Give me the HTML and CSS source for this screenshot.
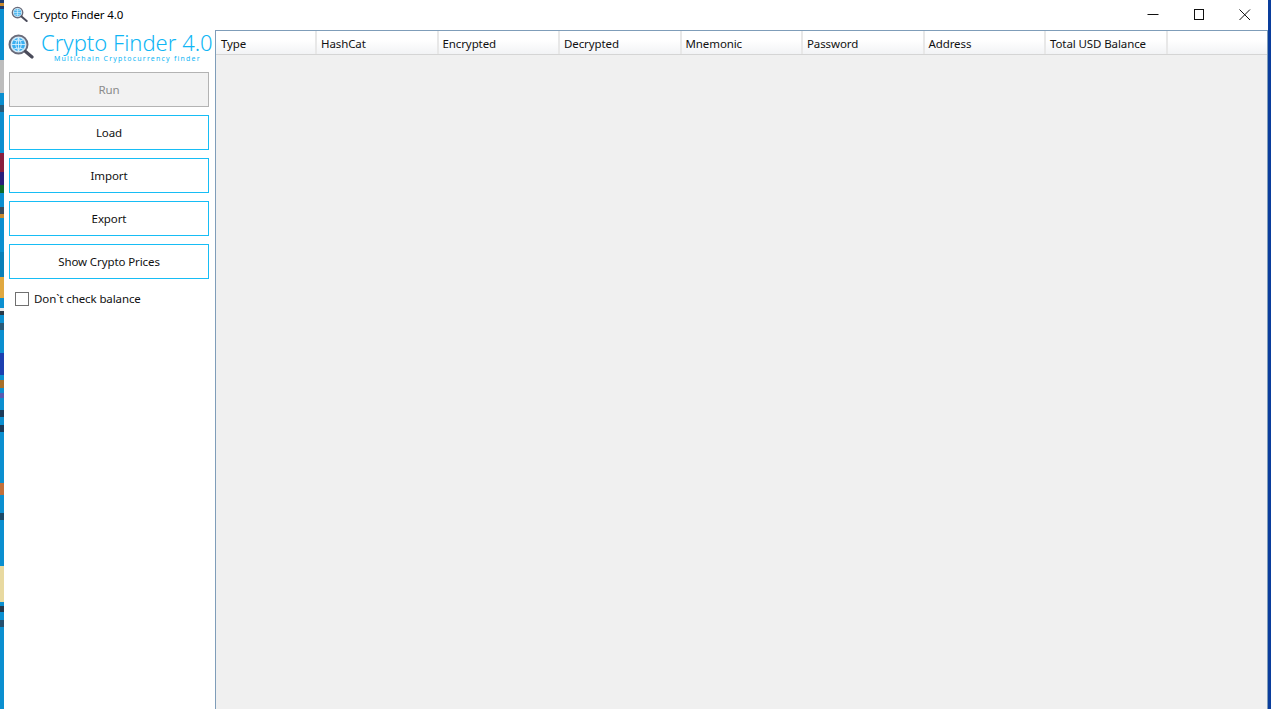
FILE: index.html
```html
<!DOCTYPE html>
<html lang="en">
<head>
<meta charset="utf-8">
<title>Crypto Finder 4.0</title>
<link rel="stylesheet" href="styles.css">
</head>
<body>
<div class="desk"></div>
<div class="window">
  <header class="titlebar">
    <svg class="ticon" viewBox="0 0 26 26"><circle cx="10" cy="10" r="8" fill="#cfe9f8" stroke="#6a6b7a" stroke-width="2"/><circle cx="10" cy="10" r="5.500" fill="#4db6ee"/><path d="M4.500 10h11M10 4.500v11M6.500 6.500c2 1 5 1 7 0M6.500 13.500c2-1 5-1 7 0" stroke="#e6f6ff" stroke-width=".9" fill="none"/><path d="M16 16l8 7" stroke="#4a4b5a" stroke-width="3" stroke-linecap="round"/></svg>
    <span class="wtitle">Crypto Finder 4.0</span>
    <div class="controls">
      <svg class="ctl" viewBox="0 0 46 30"><path d="M17.500 14.500h11" stroke="#111" fill="none"/></svg>
      <svg class="ctl" viewBox="0 0 46 30"><rect x="18.500" y="9.500" width="9" height="10" stroke="#111" fill="none"/></svg>
      <svg class="ctl" viewBox="0 0 46 30"><path d="M17.500 9.500l10.500 10.500M28 9.500L17.500 20" stroke="#111" fill="none"/></svg>
    </div>
  </header>
  <div class="content">
    <aside class="side">
      <div class="brand">
        <svg class="bicon" viewBox="0 0 26 26"><circle cx="10.500" cy="10.500" r="9" fill="#cfe9f8" stroke="#6a6b7a" stroke-width="2"/><circle cx="10.500" cy="10.500" r="6.500" fill="#39aef0"/><path d="M4 10.500h13M10.500 4v13M6 6c2.500 1.200 6.500 1.200 9 0M6 15c2.500-1.200 6.500-1.200 9 0M10.500 4c-3.500 4-3.500 9 0 13M10.500 4c3.500 4 3.500 9 0 13" stroke="#e6f6ff" stroke-width=".8" fill="none"/><path d="M17.500 17.500l6.500 5.500" stroke="#4a4b5a" stroke-width="3.200" stroke-linecap="round"/></svg>
        <div class="btext">
          <div class="bname">Crypto Finder 4.0</div>
          <div class="bsub">Multichain Cryptocurrency finder</div>
        </div>
      </div>
      <div class="actions">
        <button class="btn off" type="button">Run</button>
        <button class="btn" type="button">Load</button>
        <button class="btn" type="button">Import</button>
        <button class="btn" type="button">Export</button>
        <button class="btn" type="button">Show Crypto Prices</button>
      </div>
      <label class="check"><span class="box"></span>Don`t check balance</label>
    </aside>
    <main class="grid">
      <div class="thead">
        <div class="th">Type</div>
        <div class="th">HashCat</div>
        <div class="th">Encrypted</div>
        <div class="th">Decrypted</div>
        <div class="th">Mnemonic</div>
        <div class="th">Password</div>
        <div class="th">Address</div>
        <div class="th">Total USD Balance</div>
      </div>
    </main>
  </div>
</div>
</body>
</html>
```
FILE: styles.css
```css
* { box-sizing: border-box; }
html, body { margin: 0; height: 100%; overflow: hidden; }
body {
  display: flex;
  width: 1271px;
  height: 709px;
  background: #0a3d9c;
  font-family: "Noto Sans", "Open Sans", sans-serif;
  position: relative;
}
.desk {
  position: absolute;
  left: 0; top: 0;
  width: 4px; height: 709px;
  background: linear-gradient(
    #1c3a70 0 3px, #c98a2e 3px 6px, #1c3a70 6px 9px,
    #0b8fd0 9px 60px,
    #bdbdbd 60px 93px,
    #0b8fd0 93px 105px, #2a5a78 105px 112px,
    #0b8fd0 112px 153px,
    #8a1e3c 153px 172px, #2a1e7c 172px 185px, #0f6a2a 185px 193px,
    #0b8fd0 193px 207px, #3a4a5a 207px 214px, #c98a2e 214px 218px,
    #0b8fd0 218px 252px, #0a7fb8 252px 277px,
    #e0a840 277px 298px,
    #0b8fd0 298px 308px, #e8e8e8 308px 311px, #2a3a48 311px 315px,
    #0b8fd0 315px 323px, #2a5a78 323px 330px,
    #0b8fd0 330px 353px, #1c3fb0 353px 375px,
    #0b8fd0 375px 380px, #a8702a 380px 388px,
    #0b8fd0 388px 393px, #5a5ab0 393px 398px,
    #0b8fd0 398px 410px, #1c3a58 410px 417px,
    #0b8fd0 417px 425px, #1c3a58 425px 432px,
    #0b8fd0 432px 483px, #c4703a 483px 495px,
    #0b8fd0 495px 513px, #1c4a68 513px 520px,
    #0b8fd0 520px 566px, #e8d9a0 566px 602px,
    #0b8fd0 602px 606px, #26384a 606px 612px,
    #0b8fd0 612px 620px, #26506e 620px 627px,
    #0b8fd0 627px
  );
}
.window {
  position: relative;
  margin-left: 4px;
  width: 1264px;
  height: 709px;
  background: #fff;
  display: flex;
  flex-direction: column;
}
.titlebar {
  height: 30px;
  display: flex;
  align-items: center;
  flex: none;
  padding-left: 7px;
}
.ticon { width: 17px; height: 17px; margin-top: -2px; flex: none; }
.wtitle { margin: -1px 0 0 5px; font-size: 11.500px; color: #000; letter-spacing: -0.150px; }
.controls { margin-left: auto; display: flex; }
.ctl { width: 46px; height: 30px; display: block; }
.content { flex: 1; display: flex; min-height: 0; }
.side {
  width: 211px;
  flex: none;
  padding-left: 5px;
  display: flex;
  flex-direction: column;
}
.brand { height: 42px; display: flex; position: relative; }
.bicon { width: 26px; height: 26px; margin-top: 4px; flex: none; margin-left: -1px; }
.btext { margin-left: 7px; }
.bname { font-size: 22px; font-weight: 300; line-height: 25px; color: #10b6f5; white-space: nowrap; }
.bsub { font-size: 7px; line-height: 8px; margin-left: 13px; color: #10b6f5; letter-spacing: 1.200px; white-space: nowrap; }
.actions { display: flex; flex-direction: column; gap: 8px; }
.btn {
  width: 200px;
  height: 35px;
  background: #fff;
  border: 1px solid #17bdf5;
  font: 11.500px "Noto Sans", "Open Sans", sans-serif;
  letter-spacing: -0.100px;
  color: #111;
  padding: 0;
}
.btn.off { background: #f2f2f2; border-color: #b3b3b3; color: #8a8a8a; }
.check {
  display: flex;
  align-items: center;
  margin: 12px 0 0 6px;
  font-size: 11.500px;
  letter-spacing: -0.100px;
  color: #111;
}
.box { width: 14px; height: 14px; border: 1px solid #707070; margin-right: 5px; flex: none; }
.grid {
  flex: 1;
  border: 1px solid #7f9db9;
  border-bottom: 0;
  background: #f0f0f0;
  min-width: 0;
}
.thead {
  display: flex;
  height: 24px;
  background: linear-gradient(#fff 40%, #f2f3f5);
  border-bottom: 1px solid #d5d5d5;
}
.th {
  width: 121.500px;
  flex: none;
  padding: 2px 0 0 4px;
  font-size: 11.500px;
  letter-spacing: -0.100px;
  line-height: 21px;
  color: #111;
  border-right: 2px solid #e8e8e8;
}
.th:first-child { width: 101px; padding-left: 5px; }
```
